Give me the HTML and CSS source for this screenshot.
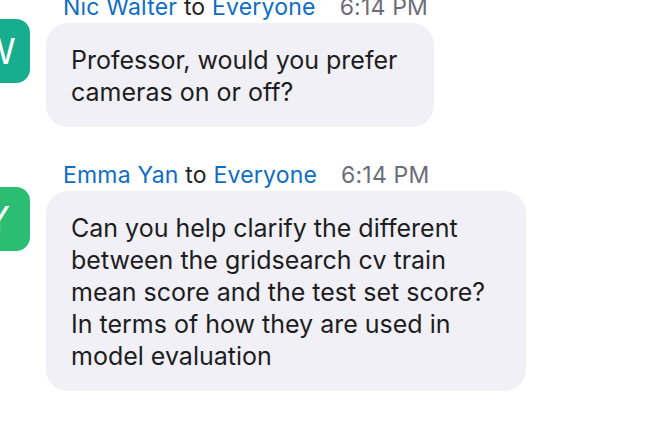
FILE: index.html
```html
<!DOCTYPE html>
<html>
<head>
<meta charset="utf-8">
<link rel="stylesheet" href="styles.css">
</head>
<body>
<div class="chat">
  <div class="msg">
    <div class="meta"><span class="name">Nic Walter</span> <span class="to">to</span> <span class="name">Everyone</span><span class="time">6:14 PM</span></div>
    <div class="row">
      <div class="avatar avatar-w">W</div>
      <div class="bubble bubble-short">Professor, would you prefer<br>cameras on or off?</div>
    </div>
  </div>
  <div class="msg">
    <div class="meta"><span class="name">Emma Yan</span> <span class="to">to</span> <span class="name">Everyone</span><span class="time">6:14 PM</span></div>
    <div class="row">
      <div class="avatar avatar-y">Y</div>
      <div class="bubble bubble-long">Can you help clarify the different<br>between the gridsearch cv train<br>mean score and the test set score?<br>In terms of how they are used in<br>model evaluation</div>
    </div>
  </div>
</div>
</body>
</html>
```
FILE: styles.css
```css
html, body {
  margin: 0;
  padding: 0;
  background: #ffffff;
}
body {
  width: 652px;
  height: 428px;
  overflow: hidden;
  font-family: Inter, "Noto Sans", sans-serif;
  color: #1d1d22;
}
.chat {
  display: flex;
  flex-direction: column;
  gap: 36px;
  margin-top: -5px;
}
.meta {
  padding-left: 63px;
  font-size: 23px;
  line-height: 24px;
  height: 24px;
  letter-spacing: 0.2px;
  color: #1f1f26;
  white-space: nowrap;
}
.name {
  color: #0e6dc6;
}
.time {
  color: #6d6d78;
  margin-left: 24px;
}
.row {
  display: flex;
  align-items: flex-start;
  gap: 16px;
  margin-top: 4px;
}
.avatar {
  flex: none;
  width: 64px;
  height: 64px;
  margin-left: -34px;
  margin-top: -4px;
  border-radius: 14px;
  color: #ffffff;
  font-size: 36px;
  display: flex;
  align-items: center;
  justify-content: center;
}
.avatar-w {
  background: #16ae8e;
}
.avatar-y {
  background: #2bbd72;
}
.bubble {
  box-sizing: border-box;
  background: #f1f0f7;
  border-radius: 22px;
  padding: 21px 24px 19px 25px;
  font-size: 25px;
  line-height: 32px;
  white-space: nowrap;
}
.bubble-short {
  width: 388px;
}
.bubble-long {
  width: 480px;
}
```
